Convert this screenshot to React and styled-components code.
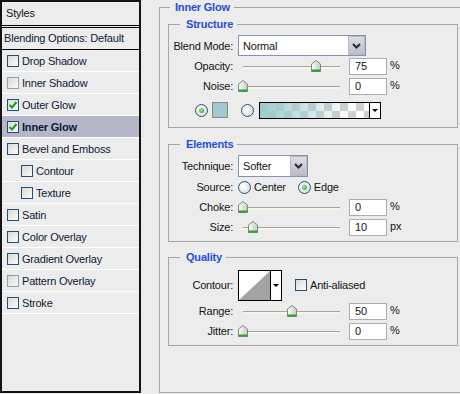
import React from 'react'
import styled, { createGlobalStyle } from 'styled-components'

const GlobalStyle = createGlobalStyle`
  html, body {
    margin: 0;
    padding: 0;
    background: #ececec;
  }
  body {
    font-family: "Liberation Sans", Arial, sans-serif;
    font-size: 11px;
    letter-spacing: -0.2px;
    color: #141414;
  }
`

const Dialog = styled.div`
  display: flex;
  width: 460px;
  height: 394px;
  overflow: hidden;
  background: #ececec;
`

// left list of layer styles
const StylesPanel = styled.div`
  box-sizing: border-box;
  flex-shrink: 0;
  width: 141px;
  height: 393px;
  border: 2px solid #141414;
  display: flex;
  flex-direction: column;
`
const PanelHeader = styled.div`
  height: 23px;
  line-height: 23px;
  padding-left: 4px;
  border-bottom: 1px solid #000;
`
const BlendRow = styled.div`
  height: 21px;
  line-height: 21px;
  margin-top: 1px;
  padding-left: 2px;
  border-top: 1px solid #000;
  border-bottom: 1px solid #000;
  color: #0e1a38;
`
const EffectRow = styled.div`
  display: flex;
  align-items: center;
  gap: 3px;
  height: 21px;
  padding-left: ${p => (p.$indent ? 19 : 5)}px;
  border-bottom: 1px solid #fff;
  background: ${p => (p.$selected ? '#b5b6c7' : 'transparent')};
  font-weight: ${p => (p.$selected ? 'bold' : 'normal')};
  color: #0e1a38;
`
const Box = styled.span`
  box-sizing: border-box;
  flex-shrink: 0;
  width: 12px;
  height: 12px;
  margin-left: ${p => p.$ml || 0}px;
  border: 1px solid ${p => (p.$faint ? '#8aa0b8' : '#1f4f7e')};
  background: linear-gradient(135deg, #dad9d2, #fbfbf8);
  display: inline-flex;
  align-items: center;
  justify-content: center;
`

const Check = ({ checked, faint, ml }) => (
  <Box $faint={faint} $ml={ml}>
    {checked && (
      <svg width="10" height="10" viewBox="0 0 10 10">
        <path d="M1.5 5 L4 7.5 L8.5 2" fill="none" stroke="#1f9a22" strokeWidth="2" />
      </svg>
    )}
  </Box>
)

// right side groups
const Main = styled.div`
  flex: 1;
  padding-left: 18px;
`
const OuterGroup = styled.fieldset`
  box-sizing: border-box;
  width: 310px;
  height: 393px;
  margin: 0;
  padding: 3px 0 0 8px;
  border: 1px solid #a6a6a6;
  min-width: 0;
`
const Legend = styled.legend`
  margin-left: ${p => p.$offset}px;
  padding: 0 4px 0 ${p => p.$pad}px;
  line-height: 14px;
  font-weight: bold;
  color: #1f4fd9;
`
const Section = styled.fieldset`
  box-sizing: border-box;
  width: 290px;
  margin: ${p => p.$gap || 0}px 0 0;
  padding: 4px 1px ${p => p.$bottom}px;
  border: 1px solid #a6a6a6;
  min-width: 0;
`
const Row = styled.div`
  display: flex;
  align-items: center;
  height: ${p => p.$h || 20}px;
  margin-top: ${p => p.$mt || 0}px;
  padding-left: ${p => p.$indent || 0}px;
  white-space: nowrap;
`
const Label = styled.span`
  flex-shrink: 0;
  width: 63px;
  margin-right: 5px;
  text-align: right;
`
const Select = styled.div`
  box-sizing: border-box;
  display: flex;
  align-items: stretch;
  width: ${p => p.$w}px;
  height: ${p => p.$h}px;
  border: 1px solid #8193b0;
  background: #fff;
`
const SelectValue = styled.span`
  flex: 1;
  padding-left: 4px;
  display: flex;
  align-items: center;
`
const SelectButton = styled.span`
  width: 15px;
  border: 1px solid #b8b8c8;
  background: linear-gradient(#dedee8, #bcbccb);
  display: flex;
  align-items: center;
  justify-content: center;
`
const Chevron = () => (
  <svg width="9" height="6" viewBox="0 0 9 6">
    <path d="M1 1 L4.5 4.5 L8 1" fill="none" stroke="#2a2a2a" strokeWidth="2" />
  </svg>
)

const SliderWrap = styled.div`
  position: relative;
  flex-shrink: 0;
  width: 107px;
  height: 20px;
  display: flex;
  align-items: center;
`
const Track = styled.div`
  flex: 1;
  margin: 3px 5px 0;
  height: 2px;
  border-top: 1px solid #a3a3a3;
  background: #f8f8ea;
`
const Thumb = styled.svg`
  position: absolute;
  top: 4px;
  left: ${p => p.$pos}px;
`
const Slider = ({ value }) => (
  <SliderWrap>
    <Track />
    <Thumb $pos={Math.round(value * 97)} width="10" height="12" viewBox="0 0 10 12">
      <defs>
        <linearGradient id="tg" x1="0" y1="0" x2="1" y2="0">
          <stop offset="0" stopColor="#fbfbf6" />
          <stop offset="1" stopColor="#c6cdc4" />
        </linearGradient>
      </defs>
      <path d="M0.5 4 L5 0.5 L9.5 4 V11.5 H0.5 Z" fill="url(#tg)" stroke="#7d8a82" />
      <rect x="0.5" y="9.5" width="9" height="2" fill="#28a62d" />
    </Thumb>
  </SliderWrap>
)

const NumberBox = styled.div`
  box-sizing: border-box;
  flex-shrink: 0;
  width: 38px;
  height: 17px;
  margin-left: 4px;
  padding-left: 5px;
  line-height: 15px;
  border: 1px solid #a9aeb6;
  background: #fff;
`
const Unit = styled.span`
  margin-left: 3px;
  margin-bottom: 3px;
`

const Radio = styled.span`
  box-sizing: border-box;
  flex-shrink: 0;
  width: 13px;
  height: 13px;
  margin-left: ${p => p.$ml || 0}px;
  border-radius: 50%;
  border: 1px solid #1f5583;
  background: radial-gradient(circle at 40% 40%, #fff, #d4d4cc);
  display: inline-flex;
  align-items: center;
  justify-content: center;
  &::after {
    content: '';
    width: 5px;
    height: 5px;
    border-radius: 50%;
    background: ${p => (p.$on ? 'radial-gradient(circle at 40% 40%, #9be69b, #1e9c22)' : 'transparent')};
  }
`
const RadioText = styled.span`
  margin-left: 3px;
`
const Swatch = styled.span`
  box-sizing: border-box;
  width: 16px;
  height: 16px;
  margin-left: 4px;
  border: 1px solid #8a8a8a;
  background: #a3c8cd;
`
const GradientBar = styled.div`
  box-sizing: border-box;
  display: flex;
  width: 122px;
  height: 17px;
  margin-left: 5px;
  border: 1px solid #000;
`
const GradientFill = styled.div`
  flex: 1;
  background:
    linear-gradient(to right, #9ccbcb, rgba(156, 203, 203, 0) 85%),
    repeating-conic-gradient(#ffffff 0 25%, #d0d0d0 0 50%) 0 0 / 16px 16px;
`
const PickerArrow = styled.span`
  width: 10px;
  border-left: 1px solid #000;
  background: #fff;
  display: flex;
  align-items: center;
  justify-content: center;
  &::after {
    content: '';
    border-left: 3px solid transparent;
    border-right: 3px solid transparent;
    border-top: 3px solid #000;
  }
`
const ContourPicker = styled.div`
  box-sizing: border-box;
  display: flex;
  height: 31px;
  border: 1px solid #000;
`

const effects = [
  { label: 'Drop Shadow' },
  { label: 'Inner Shadow', faint: true },
  { label: 'Outer Glow', checked: true },
  { label: 'Inner Glow', checked: true, selected: true },
  { label: 'Bevel and Emboss' },
  { label: 'Contour', indent: true },
  { label: 'Texture', indent: true },
  { label: 'Satin' },
  { label: 'Color Overlay' },
  { label: 'Gradient Overlay' },
  { label: 'Pattern Overlay', faint: true },
  { label: 'Stroke' },
]

const SliderRow = ({ label, value, text, unit = '%' }) => (
  <Row>
    <Label>{label}</Label>
    <Slider value={value} />
    <NumberBox>{text}</NumberBox>
    <Unit>{unit}</Unit>
  </Row>
)

export default function App() {
  return (
    <>
      <GlobalStyle />
      <Dialog>
        <StylesPanel>
          <PanelHeader>Styles</PanelHeader>
          <BlendRow>Blending Options: Default</BlendRow>
          {effects.map(e => (
            <EffectRow key={e.label} $indent={e.indent} $selected={e.selected}>
              <Check checked={e.checked} faint={e.faint} />
              {e.label}
            </EffectRow>
          ))}
        </StylesPanel>

        <Main>
          <OuterGroup>
            <Legend $offset={2} $pad={5}>Inner Glow</Legend>

            <Section $bottom={6}>
              <Legend $offset={10} $pad={6}>Structure</Legend>
              <Row $h={21}>
                <Label>Blend Mode:</Label>
                <Select $w={128} $h={21}>
                  <SelectValue>Normal</SelectValue>
                  <SelectButton><Chevron /></SelectButton>
                </Select>
              </Row>
              <SliderRow label="Opacity:" value={0.75} text="75" />
              <SliderRow label="Noise:" value={0} text="0" />
              <Row $h={22} $mt={3} $indent={25}>
                <Radio $on />
                <Swatch />
                <Radio $ml={13} />
                <GradientBar>
                  <GradientFill />
                  <PickerArrow />
                </GradientBar>
              </Row>
            </Section>

            <Section $gap={9} $bottom={4}>
              <Legend $offset={10} $pad={6}>Elements</Legend>
              <Row $h={22}>
                <Label>Technique:</Label>
                <Select $w={70} $h={22}>
                  <SelectValue>Softer</SelectValue>
                  <SelectButton><Chevron /></SelectButton>
                </Select>
              </Row>
              <Row>
                <Label>Source:</Label>
                <Radio />
                <RadioText>Center</RadioText>
                <Radio $on $ml={12} />
                <RadioText>Edge</RadioText>
              </Row>
              <SliderRow label="Choke:" value={0} text="0" />
              <SliderRow label="Size:" value={0.1} text="10" unit="px" />
            </Section>

            <Section $gap={8} $bottom={4}>
              <Legend $offset={10} $pad={6}>Quality</Legend>
              <Row $h={32} $mt={1}>
                <Label>Contour:</Label>
                <ContourPicker>
                  <svg width="31" height="29" viewBox="0 0 31 29">
                    <rect width="31" height="29" fill="#fff" />
                    <polygon points="0,29 31,0 31,29" fill="#a3a3a3" />
                  </svg>
                  <PickerArrow />
                </ContourPicker>
                <Check ml={13} />
                <RadioText>Anti-aliased</RadioText>
              </Row>
              <SliderRow label="Range:" value={0.5} text="50" />
              <SliderRow label="Jitter:" value={0} text="0" />
            </Section>
          </OuterGroup>
        </Main>
      </Dialog>
    </>
  )
}
